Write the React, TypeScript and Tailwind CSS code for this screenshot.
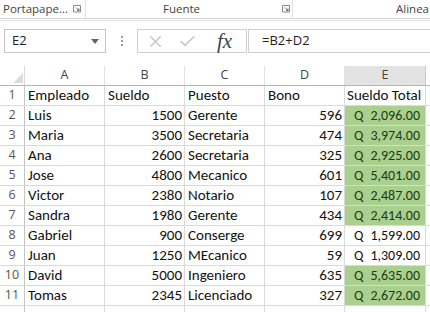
import { X, Check } from 'lucide-react';

const rows = [
  ['Luis', '1500', 'Gerente', '596', '2,096.00'],
  ['Maria', '3500', 'Secretaria', '474', '3,974.00'],
  ['Ana', '2600', 'Secretaria', '325', '2,925.00'],
  ['Jose', '4800', 'Mecanico', '601', '5,401.00'],
  ['Victor', '2380', 'Notario', '107', '2,487.00'],
  ['Sandra', '1980', 'Gerente', '434', '2,414.00'],
  ['Gabriel', '900', 'Conserge', '699', '1,599.00'],
  ['Juan', '1250', 'MEcanico', '59', '1,309.00'],
  ['David', '5000', 'Ingeniero', '635', '5,635.00'],
  ['Tomas', '2345', 'Licenciado', '327', '2,672.00'],
];

const cellFont = "font-['Carlito','Lato','Liberation_Sans',sans-serif] text-[15px] text-[#111]";
const uiFont = "font-['Open_Sans','Noto_Sans',sans-serif]";
const grid = 'grid grid-cols-[25px_80px_80px_80px_80px_81px_1fr]';

function Launcher() {
  return (
    <svg width="9" height="8" viewBox="0 0 9 8" className="ml-[5px]">
      <path d="M0.5 0.5h7v6.5h-7z" fill="none" stroke="#8a8a8a" />
      <path d="M3 2.5l3 3M6 3.5v2h-2" fill="none" stroke="#6a6a6a" />
    </svg>
  );
}

function Cell({ children, className = '' }: { children?: React.ReactNode; className?: string }) {
  return (
    <div className={`h-[20px] border-r border-b border-[#dadada] flex items-center overflow-hidden whitespace-nowrap ${className}`}>
      {children}
    </div>
  );
}

export default function App() {
  return (
    <div className="w-[430px] h-[312px] overflow-hidden bg-white">
      {/* ribbon group labels */}
      <div className={`h-[19px] flex items-center text-[11.5px] text-[#444] border-b border-[#d5d5d5] ${uiFont}`}>
        <div className="w-[86px] h-full flex items-center pl-[3px] border-r border-[#e2e2e2]">
          <span>Portapape...</span>
          <Launcher />
        </div>
        <div className="w-[207px] h-full flex items-center border-r border-[#e2e2e2]">
          <span className="ml-[77px]">Fuente</span>
          <span className="ml-[77px]"><Launcher /></span>
        </div>
        <div className="flex-1 h-full flex items-center justify-end pr-[1px]">
          <span>Alinea</span>
        </div>
      </div>
      <div className="h-[2px] border-b border-[#e4e4e4]" />

      {/* formula bar */}
      <div className={`h-[45px] flex items-start pt-[8px] ${uiFont}`}>
        <div className="ml-[4px] w-[102px] h-[24px] border border-[#c6c6c6] flex items-center pl-[7px] pr-[6px] text-[13px] text-[#222]">
          <span className="flex-1">E2</span>
          <svg width="8" height="5" viewBox="0 0 8 5"><path d="M0 0h8L4 5z" fill="#666" /></svg>
        </div>
        <div className="w-[31px] h-[24px] flex flex-col items-center justify-center gap-[2px]">
          <span className="w-[2px] h-[2px] bg-[#9a9a9a]" />
          <span className="w-[2px] h-[2px] bg-[#9a9a9a]" />
          <span className="w-[2px] h-[2px] bg-[#9a9a9a]" />
        </div>
        <div className="w-[109px] h-[24px] border-y border-l border-[#d0d0d0] flex items-center">
          <X className="ml-[8px] w-[19px] h-[19px] text-[#c8c8c8]" strokeWidth={2} />
          <Check className="ml-[13px] w-[19px] h-[19px] text-[#c8c8c8]" strokeWidth={2.2} />
          <span className="ml-[20px] font-['Liberation_Serif',serif] italic text-[21px] leading-none text-[#444]">fx</span>
        </div>
        <div className="w-[3px] h-[24px] border-x border-[#d0d0d0]" />
        <div className="flex-1 h-[24px] border-y border-[#d0d0d0] flex items-center pl-[13px] text-[13px] text-[#222]">
          =B2+D2
        </div>
      </div>

      {/* sheet */}
      <div className={`${grid} h-[20px] border-b border-[#b5b5b5] text-[12.5px] text-[#444] ${uiFont}`}>
        <div className="relative border-r border-[#dadada]">
          <svg width="10" height="10" viewBox="0 0 10 10" className="absolute right-[1px] bottom-[2px]">
            <path d="M10 0v10H0z" fill="#dcdcdc" />
          </svg>
        </div>
        {['A', 'B', 'C', 'D'].map((c) => (
          <div key={c} className="flex items-center justify-center border-r border-[#e2e2e2]">{c}</div>
        ))}
        <div className="flex items-center justify-center bg-[#e3e3e3] border-r border-[#c8c8c8]">E</div>
        <div />
      </div>

      <div className={grid}>
        <Cell className={`justify-center text-[12.5px] text-[#555] border-r-[#c5c5c5] ${uiFont}`}>1</Cell>
        <Cell className={`pl-[3px] ${cellFont}`}>Empleado</Cell>
        <Cell className={`pl-[3px] ${cellFont}`}>Sueldo</Cell>
        <Cell className={`pl-[3px] ${cellFont}`}>Puesto</Cell>
        <Cell className={`pl-[3px] ${cellFont}`}>Bono</Cell>
        <Cell className={`pl-[2px] ${cellFont}`}>Sueldo Total</Cell>
        <Cell className="border-r-0" />

        {rows.map((r, i) => {
          const n = i + 2;
          const green = parseFloat(r[4].replace(',', '')) > 2000;
          return [
            <Cell key={`h${n}`} className={`justify-center text-[12.5px] text-[#555] border-r-[#c5c5c5] ${uiFont}`}>{n}</Cell>,
            <Cell key={`a${n}`} className={`pl-[3px] ${cellFont}`}>{r[0]}</Cell>,
            <Cell key={`b${n}`} className={`justify-end pr-[2px] ${cellFont}`}>{r[1]}</Cell>,
            <Cell key={`c${n}`} className={`pl-[3px] ${cellFont}`}>{r[2]}</Cell>,
            <Cell key={`d${n}`} className={`justify-end pr-[2px] ${cellFont}`}>{r[3]}</Cell>,
            <Cell
              key={`e${n}`}
              className={`justify-between pl-[9px] pr-[5px] ${cellFont} !text-[14px] ${green ? 'bg-[#a9d08e] !text-[#1f3a10] border-[#a9d08e]' : ''}`}
            >
              <span>Q</span>
              <span>{r[4]}</span>
            </Cell>,
            <Cell key={`f${n}`} className="border-r-0" />,
          ];
        })}

        <Cell className="border-r-[#c5c5c5]" />
        <Cell /><Cell /><Cell /><Cell /><Cell /><Cell className="border-r-0" />
      </div>
    </div>
  );
}
